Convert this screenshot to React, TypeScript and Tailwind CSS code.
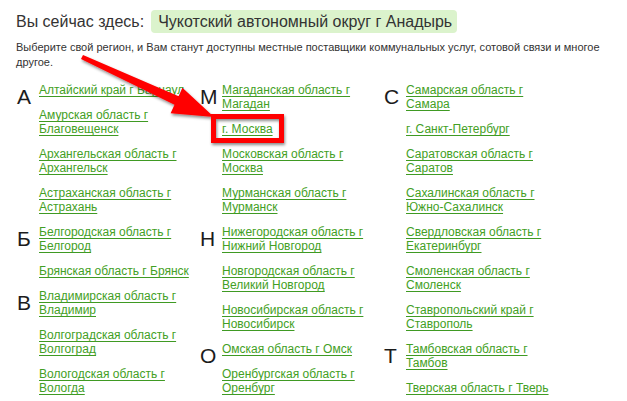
import * as React from 'react';

type Group = { letter: string; items: string[][] };

const columns: Group[][] = [
    [
        {
            letter: 'А', items: [
                ['Алтайский край г Барнаул'],
                ['Амурская область г', 'Благовещенск'],
                ['Архангельская область г', 'Архангельск'],
                ['Астраханская область г', 'Астрахань'],
            ]
        },
        {
            letter: 'Б', items: [
                ['Белгородская область г', 'Белгород'],
                ['Брянская область г Брянск'],
            ]
        },
        {
            letter: 'В', items: [
                ['Владимирская область г', 'Владимир'],
                ['Волгоградская область г', 'Волгоград'],
                ['Вологодская область г', 'Вологда'],
            ]
        },
    ],
    [
        {
            letter: 'М', items: [
                ['Магаданская область г', 'Магадан'],
                ['г. Москва'],
                ['Московская область г', 'Москва'],
                ['Мурманская область г', 'Мурманск'],
            ]
        },
        {
            letter: 'Н', items: [
                ['Нижегородская область г', 'Нижний Новгород'],
                ['Новгородская область г', 'Великий Новгород'],
                ['Новосибирская область г', 'Новосибирск'],
            ]
        },
        {
            letter: 'О', items: [
                ['Омская область г Омск'],
                ['Оренбургская область г', 'Оренбург'],
            ]
        },
    ],
    [
        {
            letter: 'С', items: [
                ['Самарская область г', 'Самара'],
                ['г. Санкт-Петербург'],
                ['Саратовская область г', 'Саратов'],
                ['Сахалинская область г', 'Южно-Сахалинск'],
                ['Свердловская область г', 'Екатеринбург'],
                ['Смоленская область г', 'Смоленск'],
                ['Ставропольский край г', 'Ставрополь'],
            ]
        },
        {
            letter: 'Т', items: [
                ['Тамбовская область г', 'Тамбов'],
                ['Тверская область г Тверь'],
            ]
        },
    ],
]

const RegionGroup = ({ group }: { group: Group }) => {
    return <div className="flex">
        <div className="w-[22px] shrink-0 mt-[3px] text-[21px] leading-[21px] text-[#1c1c1c]">{group.letter}</div>
        <ul className="flex flex-col gap-[11px]">
            {group.items.map((lines, i) => (
                <li key={i} className="text-[12px] leading-[14px]">
                    <a href="#" className="text-[#43a024] underline decoration-[#3f9a23] underline-offset-[2px]">
                        {lines.map((l, j) => <span key={j} className="whitespace-nowrap">{l}{j < lines.length - 1 && <br />}</span>)}
                    </a>
                </li>
            ))}
        </ul>
    </div>
}

export default function App() {
    return <div className="relative w-[627px] h-[401px] overflow-hidden bg-white font-['Liberation_Sans',Arial,sans-serif] text-[#333]">
        <div className="flex items-center pl-4 pt-[10px]">
            <span className="text-[16px] leading-[23px]">Вы сейчас здесь:</span>
            <span className="ml-[7px] h-[23px] pl-[7px] pr-[5px] rounded-[4px] bg-[#dbf3cc] text-[16px] leading-[23px] whitespace-nowrap">Чукотский автономный округ г Анадырь</span>
        </div>
        <p className="mt-[7px] pl-4 text-[11px] leading-[15px] whitespace-nowrap">
            Выберите свой регион, и Вам станут доступны местные поставщики коммунальных услуг, сотовой связи и многое<br />
            другое.
        </p>
        <div className="grid grid-cols-[183px_184px_1fr] pl-[17px] mt-[13px]">
            {columns.map((col, i) => (
                <div key={i} className="flex flex-col gap-[11px]">
                    {col.map((g) => <RegionGroup key={g.letter} group={g} />)}
                </div>
            ))}
        </div>

        {/* red annotation arrow + box */}
        <svg className="absolute inset-0 pointer-events-none" width="627" height="401" viewBox="0 0 627 401">
            <defs>
                <filter id="sh" x="-20%" y="-20%" width="140%" height="140%">
                    <feDropShadow dx="1" dy="2" stdDeviation="1.5" floodColor="#000" floodOpacity="0.45" />
                </filter>
            </defs>
            <g filter="url(#sh)" fill="#ff0000">
                <polygon points="83,55 178.6,96.2 182.4,87.8 214,117 170.6,113.2 174.5,104.8 81,59" />
                <rect x="213.5" y="116.5" width="68" height="24" fill="none" stroke="#ff0000" strokeWidth="5" />
            </g>
        </svg>
    </div>
}
